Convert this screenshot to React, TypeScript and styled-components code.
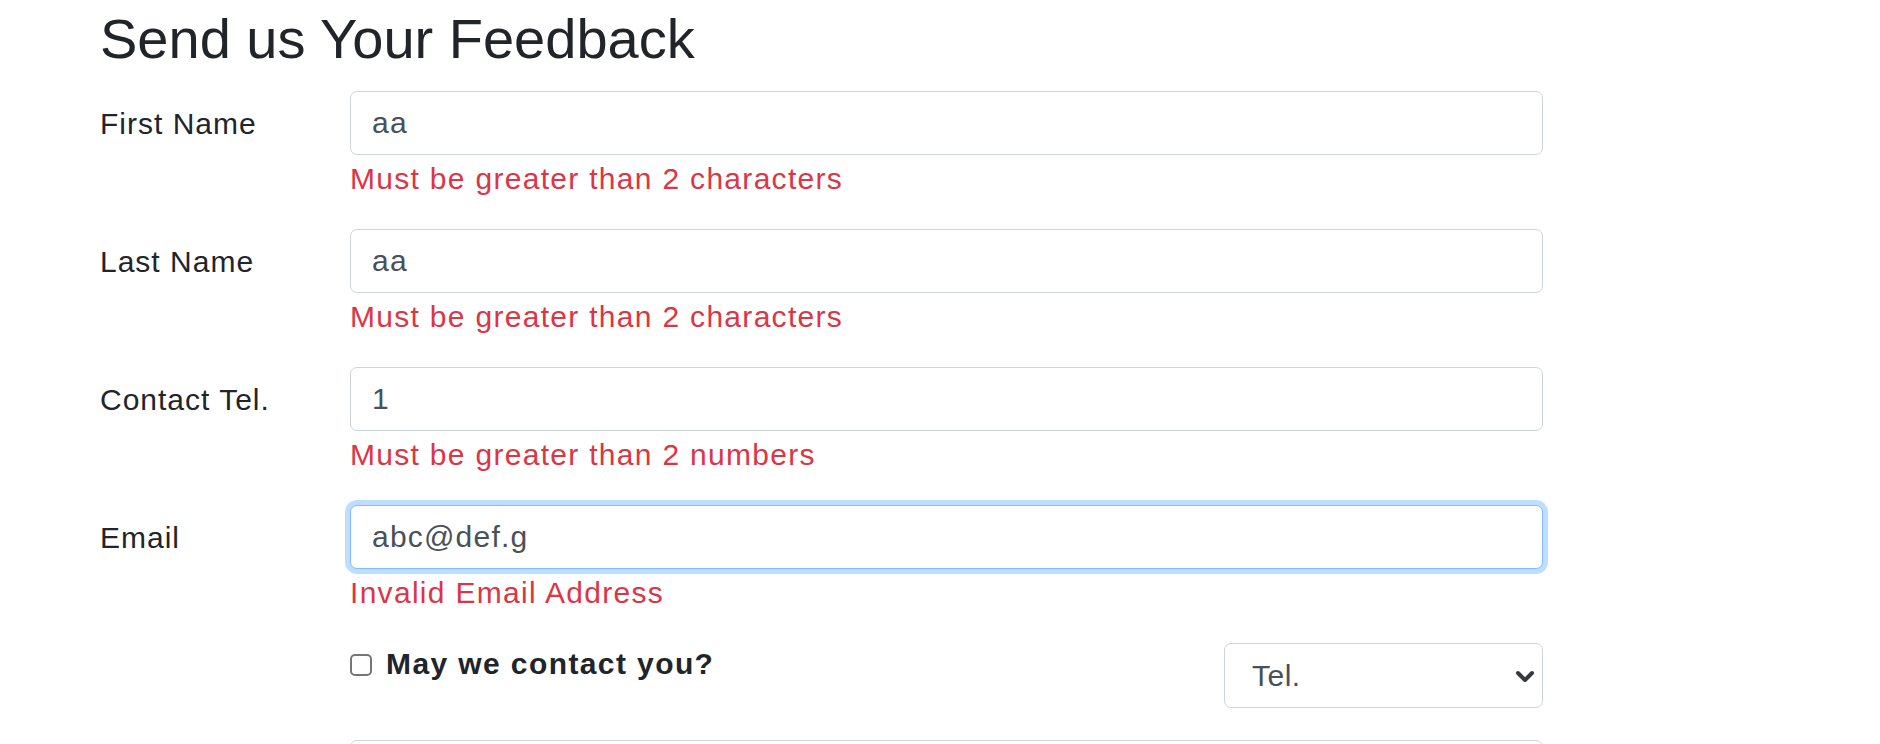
import styled, { createGlobalStyle, css } from 'styled-components'

const GlobalStyle = createGlobalStyle`
  html, body {
    margin: 0;
    padding: 0;
    background: #fff;
  }
  body {
    font-family: 'Liberation Sans', Arial, Helvetica, sans-serif;
    color: #212529;
    overflow: hidden;
  }
  * {
    box-sizing: border-box;
  }
`

const Page = styled.div`
  padding: 6px 0 0 100px;
`

const Title = styled.h2`
  margin: 0 0 19px;
  font-size: 56px;
  line-height: 66px;
  font-weight: 400;
  color: #212529;
`

const FormRow = styled.div<{ $gap?: number }>`
  display: grid;
  grid-template-columns: 250px 1193px;
  margin-bottom: ${(p) => p.$gap ?? 32}px;
`

const Label = styled.label`
  font-size: 30px;
  letter-spacing: 1px;
  line-height: 65px;
  color: #212529;
`

const Field = styled.div`
  display: flex;
  flex-direction: column;
`

const Input = styled.input<{ $focused?: boolean }>`
  height: 64px;
  width: 100%;
  padding: 0 21px;
  font-family: inherit;
  font-size: 30px;
  letter-spacing: 1.2px;
  color: #495057;
  background: #fff;
  border: 1px solid #ced4da;
  border-radius: 7px;
  outline: none;

  ${(p) =>
    p.$focused &&
    css`
      border-color: #80bdff;
      box-shadow: 0 0 0 5px rgba(0, 123, 255, 0.25);
    `}
`

const ErrorText = styled.div`
  margin-top: 3px;
  font-size: 30px;
  letter-spacing: 1.3px;
  line-height: 42px;
  color: #dc3545;
`

const OptionsRow = styled.div`
  display: flex;
  justify-content: space-between;
  align-items: flex-start;
`

const CheckLabel = styled.label`
  display: flex;
  align-items: center;
  gap: 14px;
  font-size: 30px;
  letter-spacing: 1.4px;
  line-height: 42px;
  font-weight: 700;
  color: #212529;
`

const CheckBox = styled.span`
  width: 22px;
  height: 22px;
  border: 2px solid #767676;
  border-radius: 5px;
  background: #fff;
  margin-top: 1px;
`

const SelectWrap = styled.div`
  position: relative;
  width: 319px;
  height: 65px;
`

const Select = styled.select`
  appearance: none;
  width: 100%;
  height: 100%;
  padding: 0 50px 0 27px;
  font-family: inherit;
  font-size: 30px;
  letter-spacing: 0.5px;
  color: #495057;
  background: #fff;
  border: 1px solid #ced4da;
  border-radius: 7px;
  outline: none;
`

const Chevron = styled.svg`
  position: absolute;
  right: 8px;
  top: 27px;
  pointer-events: none;
`

const TextArea = styled.textarea`
  width: 100%;
  height: 160px;
  border: 1px solid #ced4da;
  border-radius: 7px;
  resize: none;
`

const fields = [
  { label: 'First Name', value: 'aa', error: 'Must be greater than 2 characters' },
  { label: 'Last Name', value: 'aa', error: 'Must be greater than 2 characters' },
  { label: 'Contact Tel.', value: '1', error: 'Must be greater than 2 numbers' },
  { label: 'Email', value: 'abc@def.g', error: 'Invalid Email Address', focused: true },
]

function App() {
  return (
    <Page>
      <GlobalStyle />
      <Title>Send us Your Feedback</Title>

      {fields.map((f) => (
        <FormRow key={f.label} $gap={29}>
          <Label>{f.label}</Label>
          <Field>
            <Input defaultValue={f.value} $focused={f.focused} />
            <ErrorText>{f.error}</ErrorText>
          </Field>
        </FormRow>
      ))}

      <FormRow>
        <div />
        <OptionsRow>
          <CheckLabel>
            <CheckBox />
            May we contact you?
          </CheckLabel>
          <SelectWrap>
            <Select defaultValue="tel">
              <option value="tel">Tel.</option>
              <option value="email">Email</option>
            </Select>
            <Chevron width="20" height="14" viewBox="0 0 20 14">
              <path d="M3 3 L10 10 L17 3" fill="none" stroke="#343a40" strokeWidth="4" strokeLinecap="round" strokeLinejoin="round" />
            </Chevron>
          </SelectWrap>
        </OptionsRow>
      </FormRow>

      <FormRow>
        <div />
        <TextArea />
      </FormRow>
    </Page>
  )
}

export default App
